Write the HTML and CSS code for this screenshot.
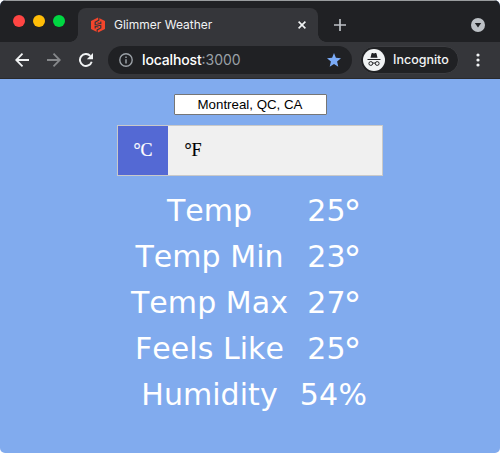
FILE: index.html
```html
<!DOCTYPE html>
<html lang="en">
<head>
<meta charset="utf-8">
<title>Glimmer Weather</title>
<link rel="stylesheet" href="styles.css">
</head>
<body>
<div class="window">
  <header class="tabs">
    <div class="lights"><i class="red"></i><i class="yellow"></i><i class="green"></i></div>
    <div class="tab">
      <svg class="logo" width="14" height="16" viewBox="0 0 14 16"><path fill="#f3452b" d="M7 .500l7 3.600v7.800L7 15.500l-7-3.600V4.100z"/><path fill="none" stroke="#35363a" stroke-width="1.200" d="M7.800 0v3.200L4.200 5.200v2.300l5.600 1.200v2.200L6.200 12.900V16M9.800 4.500v2L6.500 6M4.200 11.500v-2l3.300.5"/></svg>
      <span class="title">Glimmer Weather</span>
      <svg class="close" width="8" height="8" viewBox="0 0 8 8"><path stroke="#f1f3f4" stroke-width="1.600" d="M.6.6l6.800 6.800M7.400.6L.6 7.400"/></svg>
    </div>
    <svg class="plus" width="12" height="12" viewBox="0 0 12 12"><path stroke="#bdc1c6" stroke-width="1.700" d="M6 0v12M0 6h12"/></svg>
    <svg class="drop" width="14" height="14" viewBox="0 0 14 14"><circle cx="7" cy="7" r="7" fill="#bdc1c6"/><path fill="#202124" d="M3.800 5h6.400L7 9.500z"/></svg>
  </header>
  <nav class="toolbar">
    <svg class="back" width="14" height="14" viewBox="0 0 14 14"><path fill="none" stroke="#f1f3f4" stroke-width="1.800" d="M14 7H1.500M7.500.7L1.200 7l6.300 6.300"/></svg>
    <svg class="fwd" width="14" height="14" viewBox="0 0 14 14"><path fill="none" stroke="#86888b" stroke-width="1.800" d="M0 7h12.500M6.500.7L12.800 7l-6.300 6.300"/></svg>
    <svg class="reload" width="14" height="14" viewBox="0 0 14 14"><path fill="none" stroke="#f1f3f4" stroke-width="1.900" d="M12.700 8.700A6 6 0 1 1 11.300 2.800"/><path fill="#f1f3f4" d="M14 0v6.200H7.800z"/></svg>
    <div class="address">
      <svg width="14" height="14" viewBox="0 0 14 14"><circle cx="7" cy="7" r="6.200" fill="none" stroke="#9aa0a6" stroke-width="1.400"/><path stroke="#9aa0a6" stroke-width="1.500" d="M7 6.200v4.300M7 3.500V5"/></svg>
      <span class="url"><b>localhost</b>:3000</span>
      <svg class="star" width="14" height="14" viewBox="0 0 14 14"><path fill="#7babf8" d="M7 0l1.900 4.800 5.100.4-3.900 3.400 1.200 5.200L7 11l-4.300 2.800 1.200-5.200L0 5.200l5.100-.4z"/></svg>
    </div>
    <div class="incognito">
      <svg width="22" height="22" viewBox="0 0 22 22"><circle cx="11" cy="11" r="11" fill="#f1f3f4"/><path fill="#202124" d="M7.500 8.700l1-4.200q.3-.8 1.100-.5l1.400.4 1.400-.4q.8-.3 1.100.5l1 4.200zM4.500 10h13v1.100h-13z"/><g fill="none" stroke="#202124" stroke-width="1"><circle cx="7.800" cy="14.500" r="1.900"/><circle cx="14.200" cy="14.500" r="1.900"/><path d="M9.700 14.300q1.300-.8 2.600 0"/></g></svg>
      <span>Incognito</span>
    </div>
    <svg class="more" width="4" height="14" viewBox="0 0 4 14"><g fill="#f1f3f4"><circle cx="2" cy="2" r="1.600"/><circle cx="2" cy="7" r="1.600"/><circle cx="2" cy="12" r="1.600"/></g></svg>
  </nav>
  <main class="weather">
    <input class="city" type="text" value="Montreal, QC, CA">
    <div class="units"><button class="unit active">°C</button><button class="unit">°F</button></div>
    <div class="readings">
      <div class="row"><span class="label">Temp</span><span class="value">25<span class="deg">°</span></span></div>
      <div class="row"><span class="label">Temp Min</span><span class="value">23<span class="deg">°</span></span></div>
      <div class="row"><span class="label">Temp Max</span><span class="value">27<span class="deg">°</span></span></div>
      <div class="row"><span class="label">Feels Like</span><span class="value">25<span class="deg">°</span></span></div>
      <div class="row"><span class="label">Humidity</span><span class="value">54%</span></div>
    </div>
  </main>
</div>
</body>
</html>
```
FILE: styles.css
```css
* { box-sizing: border-box; }
body { margin: 0; background: #fff; font-family: Inter, sans-serif; }
svg { display: block; flex: none; }
.window { width: 500px; height: 453px; overflow: hidden; border-radius: 6px 6px 5px 5px; background: #81abee; }
.tabs { height: 42px; display: flex; align-items: center; background: #202124; border-top: 1px solid #999c9e; padding: 0 15px 0 13px; }
.lights { display: flex; gap: 8px; width: 65px; margin-top: -1px; }
.lights i { width: 12px; height: 12px; border-radius: 50%; }
.red { background: #ff4543; }
.yellow { background: #ffbd07; }
.green { background: #00d742; }
.tab { position: relative; width: 240px; height: 34px; align-self: flex-end; display: flex; align-items: center; padding: 0 12px 0 13px; border-radius: 8px 8px 0 0; background: #35363a; }
.tab::before, .tab::after { content: ""; position: absolute; bottom: 0; width: 8px; height: 8px; }
.tab::before { left: -8px; background: radial-gradient(circle at 0 0, transparent 7.5px, #35363a 8px); }
.tab::after { right: -8px; background: radial-gradient(circle at 100% 0, transparent 7.5px, #35363a 8px); }
.title { margin-left: 9px; font: 12px/16px Inter, sans-serif; color: #f1f3f4; white-space: nowrap; }
.close { margin-left: auto; }
.plus { margin: 7px 0 0 16px; }
.drop { margin: 7px 0 0 auto; }
.toolbar { height: 37px; display: flex; align-items: center; background: #35363a; border-bottom: 1px solid #292a2d; padding-left: 15px; }
.fwd { margin-left: 18px; }
.reload { margin-left: 18px; }
.address { width: 244px; height: 28px; margin-left: 15px; padding: 0 11px; display: flex; align-items: center; border-radius: 14px; background: #202124; }
.url { margin-left: 9px; font: 14px/20px Inter, sans-serif; color: #9aa0a6; white-space: nowrap; }
.url b { font-weight: 500; letter-spacing: -.15px; color: #fff; }
.star { margin-left: auto; }
.incognito { width: 99px; height: 28px; margin-left: 8px; padding-left: 2px; display: flex; align-items: center; border: 1px solid #3c3d41; border-radius: 14px; background: #202124; color: #f1f3f4; }
.incognito span { margin-left: 8px; font: 500 12.500px/16px Inter, sans-serif; }
.more { margin-left: 17px; }
.weather { display: flex; flex-direction: column; align-items: center; padding-top: 15px; }
.city { width: 153px; height: 21px; padding: 0; border: 1px solid #767676; border-radius: 1px; background: #fff; color: #000; text-align: center; font: 13.300px "Liberation Sans", Arial, sans-serif; }
.units { display: flex; width: 266px; height: 51px; margin-top: 10px; border: 1px solid #c9c9c9; background: #f0f0f0; }
.unit { width: 50px; padding: 0; border: 0; background: none; color: #000; font: 18px "Liberation Serif", serif; -webkit-text-stroke: .2px currentColor; }
.active { background: #5469d4; color: #fff; }
.readings { width: 250px; margin-top: 12px; color: #fff; font: 30px/46px "DejaVu Sans", Verdana, sans-serif; font-kerning: none; }
.row { display: grid; grid-template-columns: 169px 79px; height: 46px; text-align: center; white-space: nowrap; }
.label { letter-spacing: .05px; }
.value { letter-spacing: .3px; }
.deg { margin: 0 -2px 0 -2.500px; font-size: 36px; line-height: 0; vertical-align: -4px; }
```
